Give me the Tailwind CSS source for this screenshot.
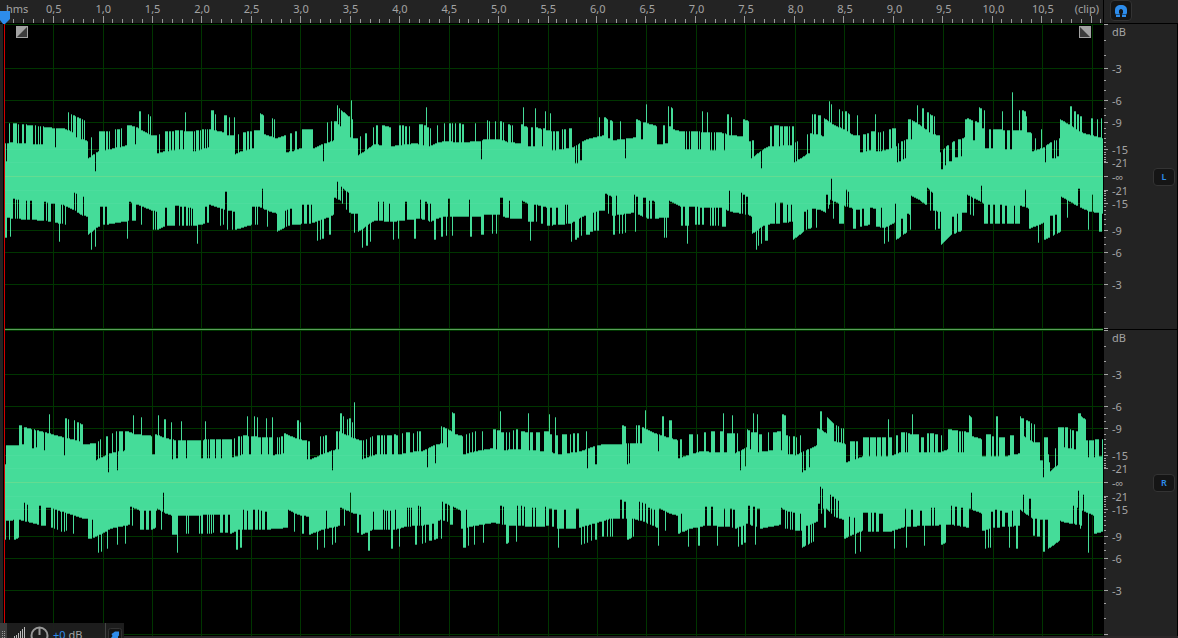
<!DOCTYPE html>
<html lang="en">

<head>
    <title>Waveform editor</title>
    <meta charset="utf-8">
    <meta name="viewport" content="width=device-width, initial-scale=1">
    <script src="https://cdn.jsdelivr.net/npm/@tailwindcss/browser@4"></script>
</head>

<body class="relative flex flex-col h-screen overflow-hidden bg-black font-['Noto_Sans',sans-serif] text-[11px] text-[#a3a3a3]">
    <header class="flex h-6 shrink-0 border-b border-black bg-[#232323]">
        <div class="relative flex-1 min-w-0 pl-1 border-r border-black">
            <div id="ruler_labels" class="flex leading-[18px] whitespace-nowrap">
                <span class="w-[25px] shrink-0 pl-[2px]">hms</span>
            </div>
            <svg id="ruler_ticks" class="absolute left-1 bottom-0 w-[calc(100%-5px)] h-[7px] fill-[#999]" viewBox="0 0 1099 7"
                preserveAspectRatio="none" shape-rendering="crispEdges"></svg>
            <svg class="absolute left-0 top-[11px] w-[10px] h-[13px] fill-[#2d8ceb] z-10" viewBox="0 0 10 13">
                <path d="M0 0H10V8L5 13H3L0 9Z" />
            </svg>
        </div>
        <div class="flex w-[74px] shrink-0 pl-[6px]">
            <button aria-label="Snap" class="flex justify-center items-center w-[22px] h-[21px] rounded-sm border border-[#333] bg-[#151515]">
                <svg class="w-3 h-3" viewBox="0 0 12 12">
                    <path fill="#2d8ceb" d="M1 12V10L0 8V5C0 2 2 0 6 0s6 2 6 5v3l-1 2v2H7V9l1-1V6c0-1-.8-2-2-2s-2 1-2 2v2l1 1v3Z" />
                    <path stroke="#1b4f80" d="M1 9.500h4M7 9.500h4" />
                </svg>
            </button>
        </div>
    </header>

    <main class="flex flex-1 min-h-0">
        <div class="w-1 shrink-0 border-r border-black bg-[#232323]"></div>
        <div class="relative flex flex-col flex-1 min-w-0 border-l border-[#d00000]">
            <svg id="wave_l" class="flex-1 min-h-0 w-full" viewBox="0 0 1098 306" preserveAspectRatio="none" shape-rendering="crispEdges"></svg>
            <svg id="wave_r" class="flex-1 min-h-0 w-full" viewBox="0 0 1098 306" preserveAspectRatio="none" shape-rendering="crispEdges"></svg>
            <button aria-label="Fade in" class="absolute left-[11px] top-[2px] w-3 h-3">
                <svg class="w-3 h-3" viewBox="0 0 12 12">
                    <path fill="#a3a3a3" d="M0 0h12v12H0z" />
                    <path fill="#3c3c3c" d="M11 1v10H1z" />
                </svg>
            </button>
            <button aria-label="Fade out" class="absolute right-[12px] top-[2px] w-3 h-3">
                <svg class="w-3 h-3" viewBox="0 0 12 12">
                    <path fill="#a3a3a3" d="M0 0h12v12H0z" />
                    <path fill="#3c3c3c" d="M1 1v10h10z" />
                </svg>
            </button>
        </div>
        <aside class="flex flex-col w-[75px] shrink-0 border-x border-black bg-[#232323]">
            <section class="flex flex-1 min-h-0 justify-between items-center pr-[2px]">
                <svg id="scale_l" class="w-10 h-full fill-[#a3a3a3]"></svg>
                <button class="w-[22px] h-[18px] rounded-sm border border-[#333] bg-[#151515] text-[9px] leading-4 font-semibold text-[#2d8ceb]">L</button>
            </section>
            <section class="flex flex-1 min-h-0 justify-between items-center pr-[2px] shadow-[0_-1px_0_#000]">
                <svg id="scale_r" class="w-10 h-full fill-[#a3a3a3]"></svg>
                <button class="w-[22px] h-[18px] rounded-sm border border-[#333] bg-[#151515] text-[9px] leading-4 font-semibold text-[#2d8ceb]">R</button>
            </section>
        </aside>
    </main>
    <footer class="h-[2px] shrink-0 bg-[#2b2729]"></footer>

    <!-- volume HUD, partly below the window edge -->
    <div class="absolute left-0 bottom-0 flex w-[124px] h-[15px] overflow-hidden bg-[#1f1f1f]/95">
        <svg class="w-7 h-[15px] shrink-0" viewBox="0 0 28 15" shape-rendering="crispEdges">
            <path fill="#3d3d3d" d="M0 0h7v15H0z" />
            <path stroke="#999" stroke-dasharray="1 1" d="M2.500 8v7M4.500 8v7" />
            <path stroke="#bbb" d="M14.500 13v2M16.500 12v3M18.500 10v5M20.500 8v7M22.500 6v9M24.500 4v11" />
        </svg>
        <button aria-label="Adjust gain" class="w-[25px] h-[15px] shrink-0 overflow-hidden">
            <svg class="w-[25px] h-[15px]" viewBox="0 0 25 15" fill="none" stroke="#999" stroke-width="2">
                <circle cx="11.500" cy="12.500" r="8" />
                <path d="M11.500 4v8" />
            </svg>
        </button>
        <span class="w-[52px] shrink-0 pt-1 leading-4 whitespace-nowrap"><span class="text-[#2d8ceb]">+0</span> dB</span>
        <button aria-label="Pin" class="w-[19px] h-[15px] shrink-0 border-l border-[#444] pl-[2px] overflow-hidden">
            <svg class="w-4 h-[15px]" viewBox="0 0 16 15">
                <rect x=".5" y="5.500" width="13" height="14" rx="2" fill="#151515" stroke="#333" />
                <path fill="#2d8ceb" d="m7 8.500 4 0 0 4-1 1v1.500H5l-2 0 1.500-2L3.500 11 5 10Z" />
            </svg>
        </button>
    </div>
</body>

</html>

<script type="text/javascript">
    // body: "x level" points joined by lines, bars: "x width level [end level]" laid over it
    var waves = {
        l: {
            top: {
                body: "5 33,13 34,13 53,40 50,55 48,63 48,75 43,75 60,85 55,85 36,88 35,88 18,95 23,99 25,99 45,105 45,105 26,127 31,127 51,135 50,143 45,152 41,157 41,157 23,165 25,183 27,195 25,209 29,209 47,224 44,227 41,235 41,235 22,240 25,254 28,254 46,264 46,264 42,276 38,285 41,286 24,292 25,300 28,313 28,322 32,334 36,341 47,353 58,353 38,358 38,358 21,374 32,391 30,415 33,429 30,436 33,444 35,460 34,480 35,484 37,500 37,508 34,521 33,528 30,542 30,552 26,570 28,575 30,582 35,590 38,604 41,608 38,613 36,636 39,647 37,657 32,668 33,673 47,680 45,720 44,730 41,743 40,749 35,751 35,751 18,760 25,768 30,794 31,794 14,810 24,810 43,824 40,824 58,832 52,846 46,853 41,860 41,860 24,870 26,880 25,897 30,897 14,906 18,906 37,912 37,912 56,917 53,927 46,931 42,940 41,943 27,951 34,962 38,967 40,967 58,985 51,985 47,1020 46,1032 43,1032 25,1044 29,1050 34,1060 38,1060 57,1083 43,1103 38",
                bars: "6 1 15,9 1 53,17 1 33,19 3 33,24 2 33,33 2 32,36 2 32,39 1 32,41 2 32,55 1 29,68 1 64,71 1 62,73 2 61,75 1 60,76 1 39,81 1 37,83 1 37,91 1 39,95 1 5,106 2 45,109 1 45,115 1 47,117 3 47,121 1 48,135 1 32,139 2 65,148 1 62,150 1 60,159 1 42,165 3 45,169 2 45,172 2 45,175 4 46,180 3 46,184 9 45,185 1 64,194 1 45,196 3 46,200 1 46,202 2 47,205 1 47,207 1 47,211 3 66,215 1 62,224 3 61,229 1 59,234 1 59,238 1 42,243 3 44,247 2 45,250 2 45,260 4 63 60,272 1 58,274 1 57,290 2 43,295 2 45,302 3 47,305 8 47,323 1 15,327 1 54,331 1 55,334 3 55,337 1 71,338 1 52,339 1 68,340 1 50,341 10 66 58,350 1 39,351 1 76,352 1 57,360 1 40,365 2 43,373 1 49,376 2 51,382 9 51 49,399 2 51,402 2 51,405 2 50,409 1 50,419 4 52,424 2 51,426 1 69,427 2 49,430 1 48,437 1 51,444 1 53,449 2 53,452 1 53,455 1 53,459 2 53,462 2 52,475 1 53,481 1 17,487 1 56,489 1 55,495 1 55,500 2 55,503 1 54,508 2 52,510 1 51,512 1 51,521 2 52,523 1 69,524 4 50 49,531 2 49,535 1 68,536 6 49 47,543 2 48,545 1 65,546 4 46,550 1 63,551 1 45,553 2 45,556 3 45,562 1 47,564 2 47,569 3 48,575 1 13,577 1 13,580 2 16,599 1 59,604 3 59 58,607 1 57,610 3 56 55,620 1 55,625 1 18,636 5 57 55,641 2 37,643 4 54,646 1 72,647 10 53 50,663 2 51,668 1 70,669 2 50,671 2 69 67,685 1 27,687 2 27,690 1 27,698 1 27,700 1 27,702 1 65,707 1 64,710 1 26,712 2 26,715 1 26,724 1 26,727 2 62,731 1 59,743 6 57 55,752 2 36,761 1 8,770 2 50,774 5 51,780 3 50,784 4 50,789 1 50,792 2 50,795 1 34,797 1 35,807 1 42,812 1 62,814 2 62,818 3 61,829 1 75,831 1 72,839 1 67,842 1 65,845 2 65,848 2 63 60,857 1 61,863 3 42,867 2 43,871 4 45,875 1 62,878 1 44,880 1 44,883 1 45,889 2 47,892 4 48,898 1 33,901 2 35,904 1 36,908 3 57,917 1 71,922 2 68,927 2 64,930 3 62 60,934 1 60,940 1 24,941 2 7,945 1 11,949 3 15,955 3 19,961 1 20,965 2 57,973 2 36,979 3 69 67,982 3 48,984 1 66,985 4 28,991 2 28,1002 1 65,1005 2 27,1010 2 27,1012 1 84,1019 1 66,1022 4 66 64,1026 1 60,1035 1 38,1041 1 47,1045 1 14,1052 2 18,1055 1 18,1057 2 20,1070 2 70,1074 2 65,1077 2 62,1080 2 60,1091 2 58,1097 1 57,1101 1 58"
            },
            bottom: {
                body: "5 61,7 61,7 41,13 42,44 44,51 45,60 47,63 47,63 28,75 34,80 38,88 40,88 58,96 51,100 49,129 44,129 25,137 28,152 34,157 35,157 53,165 49,195 49,209 46,209 28,225 33,235 35,235 53,252 48,260 48,260 31,270 35,277 37,277 55,290 48,310 47,322 43,334 38,334 21,341 24,351 37,358 37,358 55,374 44,392 45,410 43,420 42,430 45,436 42,444 40,480 40,484 38,503 38,503 40,511 42,522 42,522 24,528 27,541 29,547 31,547 49,570 47,586 38,600 34,605 34,605 17,612 20,612 39,634 36,638 38,648 42,669 41,669 24,680 30,720 31,730 35,748 38,752 40,752 57,765 48,793 45,793 63,806 53,812 51,812 32,820 33,827 37,830 23,846 30,853 32,853 52,870 48,870 31,876 32,876 50,884 51,896 45,896 63,906 56,907 37,911 38,911 19,917 22,927 29,927 11,932 16,933 34,941 35,941 68,951 58,962 54,962 36,967 36,967 18,982 26,984 28,984 47,1020 47,1020 29,1029 32,1029 52,1044 46,1044 63,1061 55,1061 20,1078 30,1090 35,1103 37",
                bars: "10 1 60,13 2 22,16 1 23,18 1 23,26 1 24,30 2 24,44 2 25,47 1 26,51 4 27,59 1 65,61 1 28,65 1 48,74 1 16,76 1 17,83 1 20,91 1 73,95 1 70,100 3 30,105 2 30,127 1 62,132 4 44,141 1 48,153 1 53,155 1 53,165 2 31,175 4 29,180 2 30,184 2 30,188 1 31,190 1 31,192 1 32,197 1 67,205 2 30,220 1 49,223 1 48,225 2 15,227 1 53,232 1 53,252 3 30,256 1 30,258 2 30,262 1 12,267 1 50,285 1 34,287 1 33,290 2 32,302 2 28,307 2 28,311 1 28,317 1 64,320 1 63,322 2 62,329 2 58,337 1 5,341 9 10 18,342 1 27,346 1 33,349 1 36,354 1 56,362 1 71,366 2 69,370 1 65,378 1 25,383 1 25,389 1 27,393 1 63,398 1 62,405 2 25,414 2 62,420 1 23,425 2 25,427 1 27,430 1 27,434 2 63,441 2 60,446 1 59,448 2 22,452 1 59,469 1 23,470 2 60,481 3 58,492 1 57,496 1 57,500 3 21,509 1 24,528 2 45,531 3 45,530 1 64,536 1 45,541 2 47,550 2 31,556 2 31,565 1 28,567 1 28,571 1 65,575 2 63,577 2 61,581 1 59,586 4 58,590 3 55,594 2 54,597 2 54,608 1 37,613 2 58,616 1 19,619 1 57,622 1 57,625 1 56,634 1 18,635 1 55,636 2 20,643 3 21,649 1 24,652 2 24,654 1 25,664 1 61,666 1 61,681 2 49,685 4 49,687 1 67,695 2 48,698 2 48,702 2 48,710 1 49,712 2 49,715 1 49,718 1 49,722 4 50,729 1 14,741 1 16,743 2 18,746 2 20,756 1 73,758 1 69,761 1 67,765 3 64,775 1 26,780 3 26,787 1 28,791 1 28,804 2 35,807 1 33,816 1 51,826 2 18,831 1 2,833 1 42,839 5 47,846 1 13,848 1 15,856 4 33,862 2 32,881 1 31,884 1 67,888 1 65,895 1 27,901 2 42,910 1 53,930 1 34,935 1 53,938 2 52,952 2 40,957 1 37,970 1 38,973 1 39,981 1 9,988 2 28,993 2 28,1000 2 28,1005 2 29,1014 1 29,1025 1 13,1038 1 66,1050 3 39,1055 2 38,1067 1 41,1078 2 12,1088 1 53,1092 1 18,1099 3 55"
            }
        },
        r: {
            top: {
                body: "5 37,16 37,24 38,24 55,32 53,45 50,55 47,63 45,80 41,83 38,96 39,96 22,109 29,127 32,127 51,135 48,155 46,155 48,166 44,176 42,232 43,232 25,243 28,243 47,262 45,272 45,272 27,284 29,284 49,298 43,310 41,310 23,332 32,342 34,342 49,354 44,362 41,362 23,376 28,400 28,415 31,422 31,436 38,443 39,443 55,451 51,455 48,463 46,463 28,480 32,493 34,504 32,512 33,520 33,545 31,560 28,580 31,597 37,605 38,642 39,642 55,655 49,664 46,678 42,678 24,700 31,735 29,747 35,747 53,750 51,750 33,757 30,773 32,786 32,786 47,797 45,797 28,810 34,817 37,817 54,822 52,827 48,827 65,834 58,834 41,846 38,846 20,863 26,863 45,892 45,892 27,900 30,940 30,948 33,948 53,969 50,972 46,982 43,982 26,1005 26,1020 29,1020 48,1033 40,1040 40,1048 28,1050 11,1058 18,1058 36,1077 33,1086 42,1103 43",
                bars: "5 1 18,19 3 57,32 2 34,36 1 35,44 1 32,49 1 68,64 1 27,65 2 64,68 1 63,74 1 62,77 2 60,80 3 59 57,98 1 41,100 1 43,106 2 46,108 1 10,112 1 49,116 1 51,117 1 12,119 4 51,125 2 51,133 1 67,141 1 65,152 3 28,158 1 67,164 2 63,171 1 60,172 1 23,176 2 24,181 1 61,186 1 24,201 2 24,205 1 61,207 1 24,209 1 24,215 1 24,221 1 24,234 1 44,238 2 46,241 1 46,247 1 66,249 2 28,254 1 66,257 1 65,261 1 28,266 1 64,268 1 28,272 1 65,277 1 45,279 1 45,281 2 46,297 2 62,300 1 60,307 1 23,320 1 46,323 1 46,325 2 47,332 1 12,336 2 51,339 1 51,340 2 69,343 1 66,347 1 63,349 2 64,352 1 60,354 1 80,360 2 42,363 1 42,366 1 43,370 1 45,372 1 46,377 3 47,381 2 47,384 1 47,387 5 47,394 4 48 46,402 1 49,406 4 50,413 1 49,417 1 51,419 2 51,427 1 15,435 1 19,441 1 56,447 1 35,452 3 70 68,466 1 48,469 1 49,472 1 50,475 1 51,482 1 51,493 3 53,497 3 52,500 1 71,501 3 50,506 1 50,509 1 50,513 1 52,516 2 53,521 7 51 50,528 1 69,530 3 50,536 4 50,544 5 51,549 1 68,550 2 48,555 1 65,556 2 47,562 5 48,570 1 48,573 2 49,577 2 49,586 1 51,587 1 14,595 2 18,622 4 57 55,627 1 18,629 1 19,636 1 57,638 2 57,645 1 72,658 1 31,662 2 66,669 3 62,680 2 43,689 4 48,697 1 48,704 2 50,711 4 51,720 4 51,723 1 69,727 5 49,732 1 67,733 2 49,737 1 49,740 1 12,745 1 16,751 2 50,753 1 69,754 3 50,757 1 68,759 3 48,768 1 50,773 4 50,777 4 51,782 4 68 66,788 1 28,790 3 28,795 1 27,800 1 47,802 1 10,804 2 12,809 1 15,820 2 71,836 1 57,838 1 56,841 1 54,843 1 54,850 5 41,856 2 41,869 1 26,876 1 26,881 1 26,886 2 26,888 1 63,896 2 47,901 4 50,906 1 50,908 2 49,910 9 48,912 1 68,921 3 45,927 2 49,930 4 49,935 3 48,941 1 47,958 1 30,961 1 30,963 1 30,969 3 67 64,986 5 48,992 2 46,996 2 66,999 6 45,1010 4 47,1020 1 66,1021 3 64,1026 4 62 60,1031 1 59,1034 1 58,1040 3 22,1043 1 5,1044 4 45,1055 1 34,1058 6 55,1065 3 55,1070 1 53,1072 2 52,1076 2 51,1078 3 69,1081 5 66 62,1088 1 25,1094 1 25,1099 3 26"
            },
            bottom: {
                body: "5 38,19 37,27 39,42 43,42 24,50 25,55 27,65 30,83 36,93 37,93 55,104 50,110 46,130 42,130 24,140 28,157 28,157 26,163 30,172 33,230 32,238 32,238 47,265 47,288 45,288 27,297 32,309 34,309 52,322 47,340 43,340 25,354 31,366 33,366 50,373 47,395 47,405 44,430 42,442 36,442 19,452 24,461 28,461 46,475 43,493 40,510 43,540 44,550 43,557 46,575 46,590 42,610 36,626 36,633 36,643 39,659 46,659 26,670 31,678 33,678 51,690 46,705 43,730 44,735 46,747 41,760 46,781 42,781 25,785 28,795 30,795 48,802 48,802 65,814 58,814 40,818 38,824 24,835 35,844 37,844 56,852 52,863 48,863 30,890 31,890 49,905 44,950 42,969 45,969 26,982 31,982 48,995 45,1020 43,1020 27,1032 36,1048 37,1048 66,1061 57,1061 39,1082 43,1082 28,1094 33,1094 51,1103 49",
                bars: "5 1 57,9 1 57,14 5 57 55,24 1 20,27 1 22,39 2 23,42 4 43,51 2 45,54 1 46,57 1 47,61 1 49,64 1 49,66 1 48,73 1 51,88 4 56,98 1 70,101 1 69,107 1 66,117 1 62,125 1 61,132 1 43,140 4 47,146 3 47,151 5 47 45,161 1 47,163 1 10,172 5 52,177 1 70,186 1 51,188 1 51,199 1 51,201 2 51,207 1 51,209 1 51,211 1 51,213 1 50,220 3 50,225 3 50,230 7 51 48,236 2 67,240 2 65,243 1 27,247 1 28,253 2 27,258 1 27,261 1 28,265 2 29,294 1 49,302 2 51,317 1 67,324 1 65,326 1 28,332 1 62,335 1 60,344 1 43,350 1 10,357 2 50,361 5 52 50,368 2 68,373 1 29,383 1 27,385 1 28,387 1 28,390 1 28,391 2 66,395 1 27,399 1 64,407 1 25,409 1 25,411 1 25,415 2 62,418 1 23,420 1 24,422 1 61,425 1 60,429 3 58,434 4 57 55,441 1 56,443 2 38,447 1 39,450 3 42,463 3 65,466 1 27,468 1 63,474 1 62,483 1 60,500 2 23,503 1 24,506 2 61,508 1 60,516 1 59,517 1 23,521 1 23,524 1 24,532 1 25,535 1 25,545 1 24,549 3 26,554 3 27,558 1 65,564 2 27,576 3 26,581 1 62,584 1 61,587 1 60,591 1 58,595 2 57,602 2 54,607 1 54,610 1 54,612 1 54,620 2 17,624 2 19,627 5 57 55,633 1 54,639 1 19,642 1 20,645 1 21,648 2 25,651 1 26,654 1 27,658 1 63,665 1 48,681 1 31,688 1 64,698 2 63,705 2 24,711 2 24,717 1 63,724 1 26,730 2 26,733 2 27,738 1 64,741 2 62,744 2 60,748 2 23,753 2 24,755 1 62,757 3 26,785 1 46,787 1 46,790 1 47,792 1 47,800 1 31,806 2 43,810 1 42,812 1 41,818 2 21,820 1 4,822 1 6,824 2 45,830 1 12,832 2 14,835 1 16,838 1 18,849 1 34,854 1 35,855 1 71,860 1 69,868 3 49,872 2 49,876 3 49,883 7 49,894 1 66,905 1 26,906 1 65,911 2 27,920 2 28,924 1 63,931 1 25,934 1 25,941 5 62 60,951 1 23,955 2 24,961 2 25,971 1 10,985 1 66,988 1 65,990 1 65,991 2 29,995 2 27,1000 2 28,1005 3 30,1009 1 65,1012 1 28,1016 2 66,1023 1 12,1029 2 16,1033 2 53,1037 3 54,1043 2 69,1060 1 38,1073 1 23,1077 1 25,1078 1 8,1080 1 46,1083 1 12,1088 1 70"
            }
        }
    };

    var first = 5, last = 1103, middle = 152;
    var spacing = 49.45;
    var majors = [[152, ''], [108, '-3'], [76, '-6'], [54, '-9'], [27, '-15'], [14, '-21'], [0, '-∞']];
    var minors = [136, 121, 96, 86, 68, 61, 48, 43, 38, 34, 30, 24, 22, 19, 17, 15];

    function parse(text) {
        return text.split(',').map(function (item) { return item.split(' ').map(Number); });
    }

    function columns(edge) {
        var levels = [];
        var points = parse(edge.body);
        for (var i = 0; i < points.length - 1; i++) {
            var a = points[i], b = points[i + 1];
            for (var x = a[0]; x < b[0]; x++) {
                levels[x] = Math.round(a[1] + (b[1] - a[1]) * (x - a[0]) / (b[0] - a[0]));
            }
        }
        parse(edge.bars).forEach(function (bar) {
            var end = bar[3] === undefined ? bar[2] : bar[3];
            for (var i = 0; i < bar[1]; i++) {
                levels[bar[0] + i] = Math.round(bar[2] + (end - bar[2]) * i / bar[1]);
            }
        });
        return levels;
    }

    function drawWave(name) {
        var top = columns(waves[name].top), bottom = columns(waves[name].bottom);
        var soft = '', solid = '', grid = '', shine = '';
        for (var x = first; x < last; x++) {
            var left = x - first;
            soft += `M${left} ${middle - top[x]}h1V${middle + 1 + bottom[x]}h-1z`;
            solid += `M${left} ${middle + 1 - top[x]}h1V${middle + bottom[x]}h-1z`;
        }
        for (var n = 1; n < 23; n++) {
            grid += `M${Math.floor(n * spacing - 0.9)} 0h1v306h-1z`;
        }
        majors.forEach(function (major) {
            grid += `M0 ${middle - major[0]}h1098v1H0zM0 ${middle + major[0]}h1098v1H0z`;
            if (major[0] > 0 && major[0] < 30) {
                shine += `M0 ${middle - major[0]}h1098v1H0zM0 ${middle + major[0]}h1098v1H0z`;
            }
        });
        var edge = name === 'l' ? 305 : 0;
        document.getElementById('wave_' + name).innerHTML = `
            <path fill="#003500" d="${grid}" />
            <path fill="#2c9c69" d="${soft}" />
            <path fill="#45dc99" d="${solid}" />
            <path fill="#fff" fill-opacity=".04" d="${shine}" />
            <rect y="${middle}" width="1098" height="1" fill="#64dc91" />
            <rect y="${edge}" width="1098" height="1" fill="${name === 'l' ? '#5c9c5c' : '#003500'}" />`;
    }

    function drawScale(name) {
        var html = '';
        majors.forEach(function (major) {
            [-1, 1].forEach(function (side) {
                if (major[0] === 0 && side > 0) return;
                var y = middle + side * major[0];
                html += `<rect y="${y / 3.06}%" width="4" height="1" shape-rendering="crispEdges" />`;
                if (major[1]) html += `<text x="8" y="${(y + 5) / 3.06}%">${major[1]}</text>`;
            });
        });
        minors.forEach(function (minor) {
            html += `<rect y="${(middle - minor) / 3.06}%" width="2" height="1" shape-rendering="crispEdges" />
                <rect y="${(middle + minor) / 3.06}%" width="2" height="1" shape-rendering="crispEdges" />`;
        });
        html += `<text x="8" y="${12 / 3.06}%">dB</text>`;
        document.getElementById('scale_' + name).innerHTML = html;
    }

    function drawRuler() {
        var labels = document.getElementById('ruler_labels');
        for (var n = 1; n < 22; n++) {
            labels.innerHTML += `<span class="w-[4.5%] shrink-0 text-center">${(n / 2).toFixed(1).replace('.', ',')}</span>`;
        }
        labels.innerHTML += '<span class="flex-1 pr-1 text-right">(clip)</span>';
        var d = '';
        for (var i = 0; i <= 111; i++) {
            var height = i % 5 === 0 && i > 0 ? 7 : 4;
            d += `M${Math.floor(i * spacing / 5 + 0.1)} ${7 - height}h1v${height}h-1z`;
        }
        document.getElementById('ruler_ticks').innerHTML = `<path d="${d}" />`;
    }

    drawRuler();
    drawWave('l');
    drawWave('r');
    drawScale('l');
    drawScale('r');
</script>
